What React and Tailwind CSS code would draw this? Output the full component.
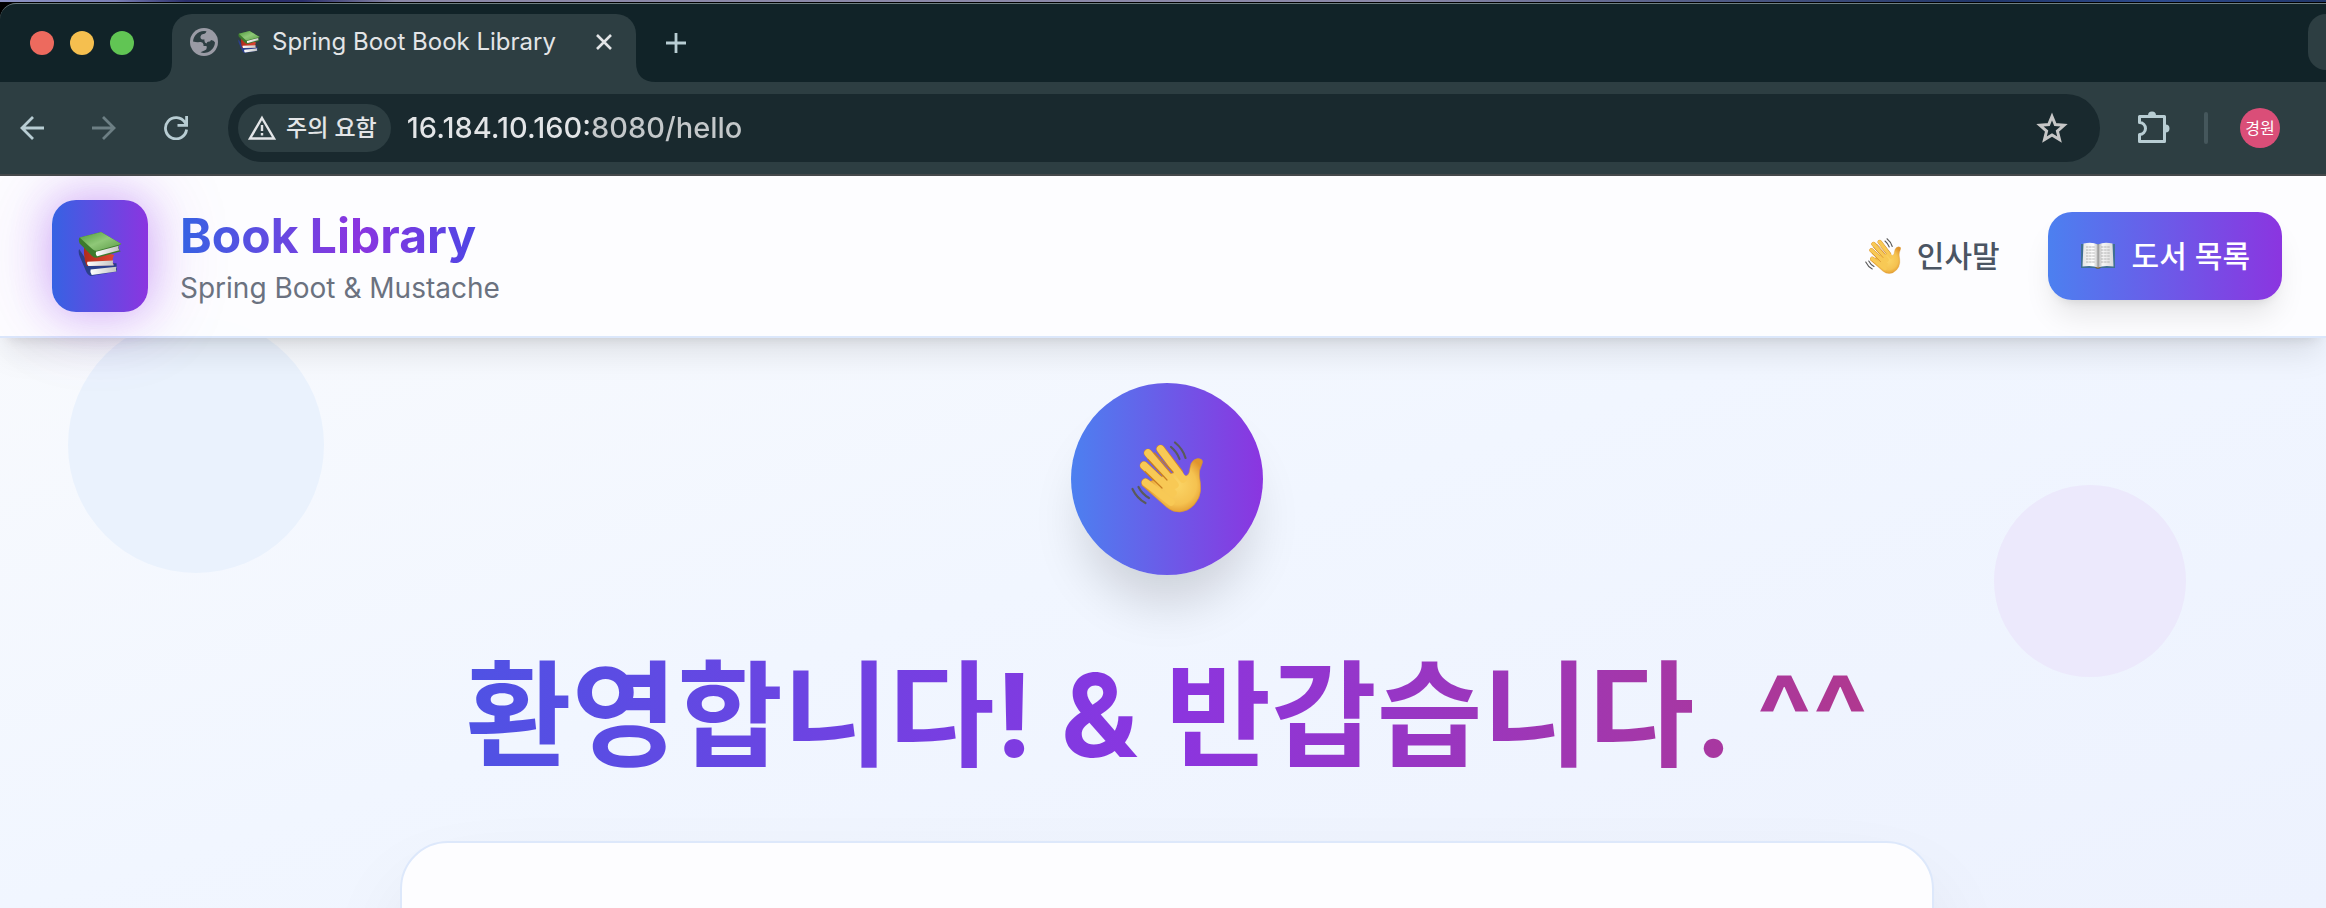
const K = "font-['Inter','Noto_Sans_CJK_KR',sans-serif]";

function Books({ className }) {
  return (
    <svg viewBox="0 0 80 80" className={className} aria-hidden="true">
      <defs>
        <linearGradient id="bkGreen" x1="0" y1="0" x2="1" y2="1">
          <stop offset="0" stopColor="#4f9a3c" />
          <stop offset="0.5" stopColor="#8fc878" />
          <stop offset="1" stopColor="#5a9a45" />
        </linearGradient>
        <linearGradient id="bkRed" x1="0" y1="0" x2="1" y2="0">
          <stop offset="0" stopColor="#b02c1c" />
          <stop offset="1" stopColor="#e04632" />
        </linearGradient>
        <linearGradient id="bkPage" x1="0" y1="0" x2="1" y2="0">
          <stop offset="0" stopColor="#ffffff" />
          <stop offset="1" stopColor="#c4c4c4" />
        </linearGradient>
      </defs>
      <path d="M2 31 L18 55 L70 57 L71 72 L23 80 Q17 78 14 70 L3 44 Q0 36 2 31Z" fill="#2b3f8c" />
      <path d="M23 68 L70 63 Q68 67 70 72 L25 78 Q21 73 23 68Z" fill="url(#bkPage)" />
      <path d="M11 28 L66 42 Q60 50 65 60 L16 62 Q10 50 11 28Z" fill="url(#bkRed)" />
      <path d="M17 54 L64 52 Q62 56 65 61 L19 62 Q15 58 17 54Z" fill="url(#bkPage)" />
      <path d="M3 10 L42 0 L79 22 L74 24 L75 33 L78 35 L34 47 Q29 47 25 43 L3 21 Q0 14 3 10Z" fill="#3d7a2d" />
      <path d="M3 10 L42 0 L79 22 L34 34 Q30 35 26 31Z" fill="url(#bkGreen)" />
      <path d="M33 36 L74 25 Q72 29 75 33 L35 44 Q31 41 33 36Z" fill="url(#bkPage)" />
    </svg>
  );
}

function Hand({ className }) {
  return (
    <svg viewBox="0 0 72 72" className={className} aria-hidden="true">
      <defs>
        <radialGradient id="palm" gradientUnits="userSpaceOnUse" cx="46" cy="44" r="30">
          <stop offset="0" stopColor="#fbd566" />
          <stop offset="0.65" stopColor="#f5c250" />
          <stop offset="1" stopColor="#e0952c" />
        </radialGradient>
      </defs>
      <g stroke="#d58a26" strokeLinecap="round" fill="none" strokeWidth="8.6">
        <path d="M14.5 41.5 L34 57" />
        <path d="M13 24.5 L36 46" />
        <path d="M17 12 L40 38" />
        <path d="M29.5 8 L48 32" />
      </g>
      <path
        d="M10.5 44 L36 66.5 Q42 71.5 49 71 Q57 70.5 63 64 Q69 57 69.5 50 Q70 44 68.5 36 Q67.5 30 70.5 24 Q72.5 20 70.5 18.5 Q67 16.5 63 19 Q59.5 21.5 59 27 Q58.5 33 56 34.5 Q52 36 48 30 L30 36Z"
        fill="url(#palm)" stroke="#d99430" strokeWidth="0.6"
      />
      <g stroke="#f8c955" strokeLinecap="round" fill="none" strokeWidth="7.4">
        <path d="M14.5 41.5 L40 61" />
        <path d="M13 24.5 L42 52" />
        <path d="M17 12 L44 44" />
        <path d="M29.5 8 L52 38" />
      </g>
      <g stroke="#c87e20" strokeLinecap="round" fill="none" strokeWidth="1.2">
        <path d="M14 30.5 L31 47" />
        <path d="M17 18.5 L36 39" />
        <path d="M23.5 12 L42 31" />
      </g>
      <g stroke="#5a5a5a" strokeLinecap="round" fill="none" strokeWidth="2.2">
        <path d="M40 6 Q46 11 48.5 18" />
        <path d="M44 1.5 Q52 8 54.5 17" />
        <path d="M7.5 46 Q11 53 18 57" />
        <path d="M1.5 48 Q6 57.5 14.5 62" />
      </g>
    </svg>
  );
}

function OpenBook({ className }) {
  return (
    <svg viewBox="0 0 34 28" className={className} aria-hidden="true">
      <defs>
        <linearGradient id="leafL" x1="0" y1="0" x2="1" y2="0">
          <stop offset="0" stopColor="#e4e4e4" />
          <stop offset="0.7" stopColor="#ffffff" />
          <stop offset="1" stopColor="#bdbdbd" />
        </linearGradient>
        <linearGradient id="leafR" x1="0" y1="0" x2="1" y2="0">
          <stop offset="0" stopColor="#a9a9a9" />
          <stop offset="0.3" stopColor="#f6f6f6" />
          <stop offset="1" stopColor="#d9d9d9" />
        </linearGradient>
      </defs>
      <path d="M0 2 H34 V26 H20 Q17 28 14 26 H0Z" fill="#3f6f93" />
      <path d="M14 25 Q17 28 20 25Z" fill="#8a5b22" />
      <path d="M1.5 24.5 L2.5 1.5 Q11 -0.5 17 2.5 V25.5 Q11 23 1.5 24.5Z" fill="url(#leafL)" />
      <path d="M32.5 24.5 L31.5 1.5 Q23 -0.5 17 2.5 V25.5 Q23 23 32.5 24.5Z" fill="url(#leafR)" />
      <g stroke="#a6a6a6" strokeWidth="0.8" strokeDasharray="2.5 0.6">
        <path d="M5 5H14M5 8H14M5 11H14M5 14H14M5 17H14M5 20H14" />
        <path d="M20 5H29M20 8H29M20 11H29M20 14H29M20 17H29M20 20H29" />
      </g>
      <path d="M17 2.5V25.5" stroke="#8b8b8b" strokeWidth="0.8" />
    </svg>
  );
}

function TabStrip() {
  return (
    <div className="flex h-[79px] items-end rounded-tl-2xl border-t border-[#6f7f82] bg-[#112328]">
      <div className="mb-[27px] ml-[30px] flex gap-4">
        <button aria-label="닫기" className="size-6 rounded-full bg-[#ed6a5e]" />
        <button aria-label="최소화" className="size-6 rounded-full bg-[#f5bf4f]" />
        <button aria-label="확대" className="size-6 rounded-full bg-[#61c554]" />
      </div>
      <div className="ml-[18px] flex h-[68px] items-end">
        <svg viewBox="0 0 20 20" className="size-5" aria-hidden="true">
          <path d="M0 20 Q20 20 20 0 V20Z" fill="#2d3e42" />
        </svg>
        <div className="flex h-[68px] w-[464px] items-center rounded-t-[20px] bg-[#2d3e42] pr-6 pb-3 pl-[18px]">
          <svg viewBox="0 0 28 28" className="size-7 shrink-0" aria-hidden="true">
            <circle cx="14" cy="14" r="14" fill="#9a9ba5" />
            <path d="M16.5 3.3 A11 11 0 0 0 3 13.5 Q7 14.5 10 14 Q13 13.5 13.5 16.5 V18 H16.5 Q17.5 22 14.5 22.5 L10.5 24.3 A11 11 0 0 0 25 14.5 Q24 12 21 12 L20 13.5 Q17 13 16.5 15.5 Q14 14.5 14.5 11.5 Q10 12 10.5 8.5 Q11 5.5 14 6 Q16 5.5 16.5 3.3Z" fill="#2d3e42" />
          </svg>
          <Books className="ml-5 size-[22px] shrink-0" />
          <span className={`ml-3 flex-1 text-2xl whitespace-nowrap text-[#e3e5e7] ${K}`}>Spring Boot Book Library</span>
          <button aria-label="탭 닫기" className="size-4">
            <svg viewBox="0 0 16 16" fill="none" stroke="#e3e5e7" strokeWidth="2.6"><path d="M1 1 15 15M15 1 1 15" /></svg>
          </button>
        </div>
        <svg viewBox="0 0 20 20" className="size-5" aria-hidden="true">
          <path d="M20 20 Q0 20 0 0 V20Z" fill="#2d3e42" />
        </svg>
      </div>
      <button aria-label="새 탭" className="mb-[29px] ml-[10px] size-5">
        <svg viewBox="0 0 20 20" fill="none" stroke="#b8cdd3" strokeWidth="2.8"><path d="M10 0V20M0 10H20" /></svg>
      </button>
      <button aria-label="탭 검색" className="mb-3 ml-auto h-14 w-[18px] rounded-l-[18px] bg-[#2d3e42]" />
    </div>
  );
}

function Toolbar() {
  return (
    <div className="relative z-20 flex h-[94px] items-center border-b-2 border-[#45494b] bg-[#2d3e42] pr-[46px] pl-5">
      <button aria-label="뒤로" className="size-6">
        <svg viewBox="0 0 24 24" fill="none" stroke="#b8cdd3" strokeWidth="2.8"><path d="M24 12H2M13 1 2 12 13 23" /></svg>
      </button>
      <button aria-label="앞으로" className="ml-12 size-6">
        <svg viewBox="0 0 24 24" fill="none" stroke="#6d7f84" strokeWidth="2.8"><path d="M0 12H22M11 1 22 12 11 23" /></svg>
      </button>
      <button aria-label="새로고침" className="ml-12 size-6">
        <svg viewBox="0 0 24 24" fill="none" stroke="#b8cdd3" strokeWidth="2.8"><path d="M22.6 13.5A10.6 10.6 0 1 1 21 6.5L22.5 9M22.6 0V9.4H13.5" /></svg>
      </button>
      <div className="ml-10 flex h-[68px] flex-1 items-center rounded-full bg-[#19292e] pr-8 pl-[10px]">
        <button className={`flex h-12 items-center gap-[10px] rounded-full bg-[#2d3e42] pr-[14px] pl-[10px] text-[23px] font-medium whitespace-nowrap text-[#e3e5e7] ${K}`}>
          <svg viewBox="0 0 28 26" className="h-[26px] w-7" fill="none" stroke="#e3e5e7" strokeWidth="2.4"><path d="M14 3 26 23.5H2ZM14 10V16M14 18V20.5" /></svg>
          주의 요함
        </button>
        <input
          aria-label="주소"
          readOnly
          value="16.184.10.160:8080/hello"
          className={`ml-4 min-w-0 flex-1 bg-linear-to-r from-[#e3e5e7] from-[186px] to-[#c4c8ca] to-[186px] bg-clip-text text-[29px] font-medium text-transparent outline-none ${K}`}
        />
        <button aria-label="북마크" className="size-8">
          <svg viewBox="0 0 32 32" fill="none" stroke="#c7c7c7" strokeWidth="3"><path d="M16 4.5 19.3 12.6 28 13.3 21.4 19 23.5 27.5 16 22.9 8.5 27.5 10.6 19 4 13.3 12.7 12.6Z" /></svg>
        </button>
      </div>
      <button aria-label="확장 프로그램" className="ml-9 size-9">
        <svg viewBox="0 0 36 36" fill="none" stroke="#b8cdd3" strokeWidth="3" strokeLinejoin="round">
          <path d="M3.5 6.5H28.5V31.5H3.5V24.5A6 6 0 0 0 3.5 12.5Z" />
          <path d="M12 5.5A4 4 0 0 1 20 5.5ZM29.5 14.5A4 4 0 0 1 29.5 22.5Z" fill="#b8cdd3" stroke="none" />
        </svg>
      </button>
      <span className="ml-8 h-8 w-1 rounded-full bg-[#45575c]" />
      <button className={`ml-8 size-10 rounded-full bg-[#da4e78] text-[16px] whitespace-nowrap text-white ${K}`}>경원</button>
    </div>
  );
}

function Header() {
  return (
    <header className="relative z-10 flex items-center border-b-2 border-[#dbe7fb] bg-[#fdfdff]/95 py-6 pr-11 pl-[52px] shadow-[0_20px_30px_-6px_rgba(0,0,0,0.1),0_8px_12px_-8px_rgba(0,0,0,0.12)]">
      <div className="flex h-28 w-24 items-center justify-center rounded-3xl bg-linear-to-r/srgb from-[#3662e3] to-[#8b35e0] pb-1 shadow-[0_0_40px_rgba(147,51,234,0.3),0_0_80px_rgba(147,51,234,0.25)]">
        <Books className="size-11" />
      </div>
      <div className={`ml-8 ${K}`}>
        <div className="w-fit bg-linear-to-r/srgb from-[#3662e3] via-[#8b35e0] via-60% to-[#4f46e5] bg-clip-text text-5xl leading-16 font-bold text-transparent">Book Library</div>
        <p className="text-[28px] leading-10 text-[#6b7280]">Spring Boot &amp; Mustache</p>
      </div>
      <nav className={`ml-auto flex items-center gap-12 text-[30px] font-medium whitespace-nowrap ${K}`}>
        <a href="#hello" className="flex items-center gap-4 text-[#4b5563]">
          <Hand className="size-9" />
          인사말
        </a>
        <a href="#books" className="flex h-[88px] items-center gap-4 rounded-3xl bg-linear-to-r/srgb from-[#4c80f0] to-[#8b35e0] px-8 text-white shadow-[0_20px_30px_-6px_rgba(0,0,0,0.1),0_8px_12px_-8px_rgba(0,0,0,0.12)]">
          <OpenBook className="h-7 w-9" />
          도서 목록
        </a>
      </nav>
    </header>
  );
}

export default function App() {
  return (
    <div className="flex min-h-screen flex-col overflow-hidden bg-black">
      <div className="mb-px h-[2px] bg-[linear-gradient(90deg,#8d93c4_0%,#7a7fb5_5%,#2a2f6b_8%,#2a2f6b_13%,#8a88a8_17%,#8a88a8_60%,#203568_85%,#2d4a8c_93%,#203568_100%)]" />
      <TabStrip />
      <Toolbar />
      <div className="relative flex flex-1 flex-col bg-linear-to-br/srgb from-[#fafbfd] via-[#f1f6ff] to-[#edf2fe]">
        <Header />
        <div className="absolute top-[141px] left-[68px] size-64 rounded-full bg-[#eaf2fd]" />
        <div className="absolute top-[309px] right-[140px] size-48 rounded-full bg-[#ece9fc]" />
        <main className="relative flex flex-1 flex-col items-center pt-[45px] pl-2">
          <div className="flex size-48 items-center justify-center rounded-full bg-linear-to-r/srgb from-[#4c80f0] to-[#8b35e0] pb-1 shadow-[0_40px_50px_-12px_rgba(0,0,0,0.15)]">
            <Hand className="size-[72px]" />
          </div>
          <h1 className={`mt-[66px] bg-linear-to-r/srgb from-[#4f52e4] via-[#8b35e0] to-[#b0388f] bg-clip-text text-[115px] leading-[150px] font-bold whitespace-nowrap text-transparent ${K}`}>
            환영합니다! &amp; 반갑습니다. ^^
          </h1>
          <section className="mt-[50px] -mb-12 w-full max-w-[1534px] flex-1 rounded-[48px] border-2 border-[#dde8fb] bg-[#fdfdff] shadow-[0_50px_100px_-24px_rgba(0,0,0,0.2)]" />
        </main>
      </div>
    </div>
  );
}
